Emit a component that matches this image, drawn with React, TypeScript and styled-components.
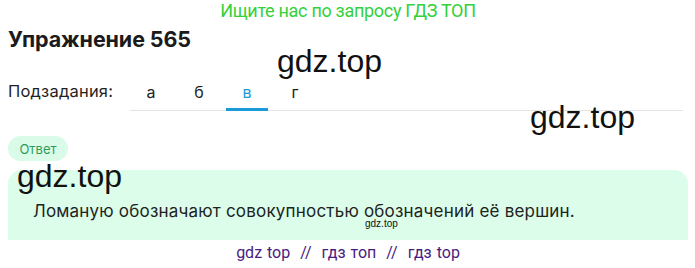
import styled, { createGlobalStyle } from "styled-components";

const GlobalStyle = createGlobalStyle`
  html, body {
    margin: 0;
    padding: 0;
    background: #ffffff;
  }
  body {
    font-family: Inter, "Noto Sans", sans-serif;
    color: #1f1f1f;
  }
`;

const Page = styled.div`
  position: relative;
  width: 695px;
  height: 268px;
  overflow: hidden;
  padding: 0 7px 0 8px;
  box-sizing: border-box;
`;

const Banner = styled.div`
  height: 20px;
  display: flex;
  align-items: center;
  justify-content: center;
  font-family: Roboto, "Liberation Sans", sans-serif;
  font-size: 18px;
  color: #33d13a;
  letter-spacing: -0.3px;
`;

const Title = styled.h1`
  margin: 0;
  height: 38px;
  display: flex;
  align-items: center;
  font-size: 21.5px;
  font-weight: 700;
  color: #1b1b1b;
  letter-spacing: -0.1px;
`;

const SubRow = styled.div`
  display: flex;
  align-items: flex-end;
  height: 53px;
`;

const SubLabel = styled.div`
  width: 122px;
  line-height: 24px;
  padding-bottom: 8px;
  font-size: 16.5px;
  letter-spacing: 0.2px;
  color: #1f1f1f;
`;

const TabList = styled.div`
  flex: 1;
  display: flex;
  gap: 6px;
  margin-right: 5px;
  border-bottom: 1px solid #e4e4e4;
`;

const Tab = styled.div<{ $active?: boolean }>`
  width: 42px;
  text-align: center;
  line-height: 24px;
  padding-bottom: 4px;
  font-size: 16px;
  color: ${(p) => (p.$active ? "#1a9ad8" : "#222")};
  border-bottom: 3px solid ${(p) => (p.$active ? "#1a9ad8" : "transparent")};
  margin-bottom: -1px;
`;

const Badge = styled.div`
  margin-top: 25px;
  width: 60px;
  height: 25px;
  border-radius: 13px;
  background: #dafbe7;
  color: #2e9b5e;
  font-size: 13px;
  display: flex;
  align-items: center;
  justify-content: center;
`;

const Card = styled.div`
  margin-top: 9px;
  height: 70px;
  background: #dbfde9;
  border-radius: 14px 14px 0 0;
  box-sizing: border-box;
  padding: 31px 0 0 25px;
  font-size: 17px;
  letter-spacing: 0.2px;
  color: #222;
`;

const Footer = styled.div`
  height: 24px;
  display: flex;
  align-items: center;
  justify-content: center;
  font-family: Roboto, "Liberation Sans", sans-serif;
  font-size: 16px;
  color: #4a1b80;
  word-spacing: 1px;
  white-space: pre;
`;

const Mark = styled.div<{ $size: number }>`
  position: absolute;
  font-family: "Liberation Sans", Arial, sans-serif;
  font-size: ${(p) => p.$size}px;
  color: #111;
  line-height: 1;
  pointer-events: none;
`;

export default function App() {
  const tabs = ["а", "б", "в", "г"];
  return (
    <>
      <GlobalStyle />
      <Page>
        <Banner>Ищите нас по запросу ГДЗ ТОП</Banner>
        <Title>Упражнение 565</Title>
        <SubRow>
          <SubLabel>Подзадания:</SubLabel>
          <TabList>
            {tabs.map((t) => (
              <Tab key={t} $active={t === "в"}>
                {t}
              </Tab>
            ))}
          </TabList>
        </SubRow>
        <Badge>Ответ</Badge>
        <Card>Ломаную обозначают совокупностью обозначений её вершин.</Card>
        <Footer>gdz top  //  гдз топ  //  гдз top</Footer>

        <Mark $size={32} style={{ left: 277, top: 45 }}>gdz.top</Mark>
        <Mark $size={32} style={{ left: 530, top: 101 }}>gdz.top</Mark>
        <Mark $size={32} style={{ left: 17, top: 160 }}>gdz.top</Mark>
        <Mark $size={10} style={{ left: 365, top: 219 }}>gdz.top</Mark>
      </Page>
    </>
  );
}
